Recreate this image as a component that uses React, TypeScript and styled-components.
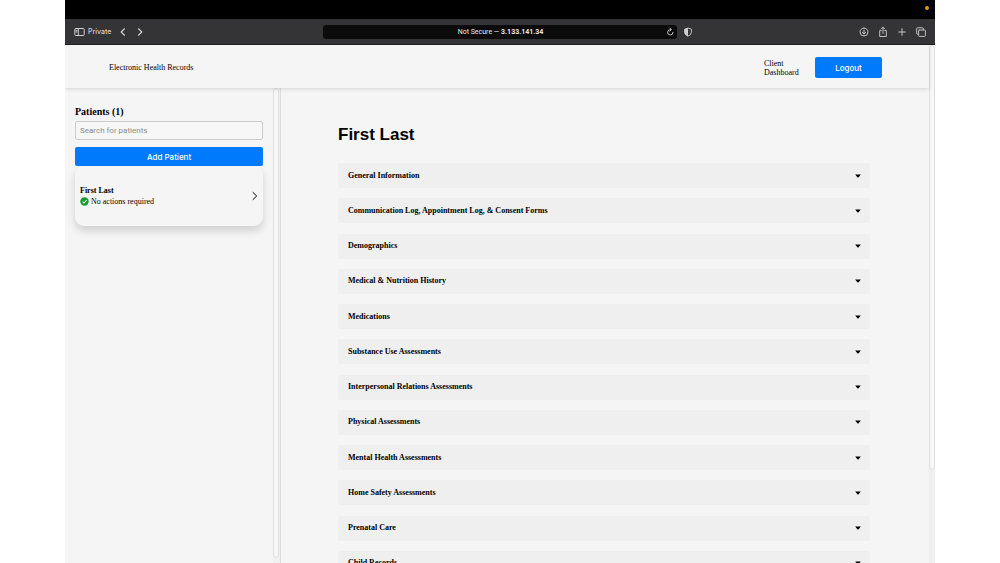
import React from "react";
import styled, { createGlobalStyle } from "styled-components";

const serif = `"Liberation Serif", "Times New Roman", serif`;
const sans = `Inter, "Liberation Sans", sans-serif`;
const narrowSans = `Roboto, "Liberation Sans", sans-serif`;

const GlobalStyle = createGlobalStyle`
  *, *::before, *::after { box-sizing: border-box; }
  body { margin: 0; background: #fff; font-family: ${serif}; font-size: 8px; line-height: 10px; color: #000; }
  h1, h2, h3, p, ul { margin: 0; padding: 0; }
  button { font: inherit; color: inherit; border: 0; padding: 0; background: none; cursor: pointer; }
`;

const Desktop = styled.div`
  height: 100vh;
  margin: 0 6.5%;
  display: flex;
  flex-direction: column;
  overflow: hidden;
  background: #f5f5f5;
`;

const MenuBar = styled.div`
  flex: none;
  height: 19px;
  padding: 6px 6px 0;
  display: flex;
  justify-content: flex-end;
  background: #000;
`;

const RecordingDot = styled.span`
  width: 4px;
  height: 4px;
  border-radius: 50%;
  background: #e8960c;
`;

const BrowserBar = styled.div`
  flex: none;
  height: 26px;
  display: grid;
  grid-template-columns: 1fr minmax(0, 354px) 1fr;
  align-items: center;
  background: #343436;
  border-bottom: 1px solid #202022;
  color: #d0d0d2;
  font-family: ${sans};
`;

const BarGroup = styled.div<{ $gap: number }>`
  display: flex;
  align-items: center;
  gap: ${(p) => p.$gap}px;
`;

const NavGroup = styled(BarGroup)`
  padding-left: 9px;
`;

const ToolGroup = styled(BarGroup)`
  padding: 0 8px 0 6px;
  justify-content: space-between;
`;

const PrivateLabel = styled.span`
  margin: 0 -1px 0 -6px;
  font-size: 7px;
  font-weight: 500;
`;

const IconButton = styled.button`
  display: flex;
`;

const AddressBar = styled.div`
  height: 14px;
  padding: 0 2px 0 12px;
  display: flex;
  align-items: center;
  border-radius: 3px;
  background: #0b0b0c;
  color: #e6e6e8;
  font-family: ${narrowSans};
  font-size: 7px;
`;

const Address = styled.span`
  flex: 1;
  text-align: center;
`;

const Viewport = styled.div`
  flex: 1;
  min-height: 0;
  display: flex;
`;

const Page = styled.div`
  flex: 1;
  min-width: 0;
  display: flex;
  flex-direction: column;
`;

const Header = styled.header`
  flex: none;
  height: 43px;
  padding: 2px 47px 0 44px;
  display: flex;
  align-items: center;
  gap: 16px;
  position: relative;
  background: #f5f5f5;
  box-shadow: 0 1px 4px rgba(0, 0, 0, 0.14);
`;

const Brand = styled.span`
  margin-right: auto;
`;

const HeaderLink = styled.a`
  width: 35px;
  line-height: 9px;
  color: inherit;
  text-decoration: none;
`;

const PrimaryButton = styled.button<{ $wide?: boolean }>`
  width: ${(p) => (p.$wide ? "100%" : "67px")};
  height: ${(p) => (p.$wide ? 19 : 21)}px;
  border-radius: 2px;
  background: #007afc;
  color: #fff;
  font-family: ${sans};
  font-weight: 500;
`;

const Columns = styled.div`
  flex: 1;
  min-height: 0;
  display: flex;
`;

const Sidebar = styled.aside`
  flex: none;
  width: 216px;
  display: flex;
  border-right: 1px solid #dcdcdc;
`;

const SidebarContent = styled.div`
  flex: 1;
  min-width: 0;
  padding: 18px 10px 0;
  display: flex;
  flex-direction: column;
`;

const SidebarTitle = styled.h2`
  font-size: 10px;
  line-height: 12px;
  font-weight: 700;
`;

const SearchInput = styled.input`
  width: 100%;
  height: 19px;
  margin: 3px 0 7px;
  padding: 0 4px;
  border: 1px solid #ccc;
  border-radius: 2px;
  background: #f7f7f7;
  font-family: ${narrowSans};
  font-size: 8px;
  &::placeholder { color: #8b8b8b; opacity: 1; }
`;

const PatientCard = styled.button`
  height: 60px;
  padding: 0 5px;
  display: flex;
  align-items: center;
  justify-content: space-between;
  border-radius: 9px;
  background: #f5f5f5;
  box-shadow: 0 5px 9px rgba(0, 0, 0, 0.15);
  clip-path: inset(0 -14px -16px -14px);
  text-align: left;
`;

const PatientInfo = styled.span`
  display: flex;
  flex-direction: column;
  gap: 1px;
`;

const Status = styled.span`
  display: flex;
  align-items: center;
  gap: 2px;
`;

const Track = styled.div<{ $inset?: boolean }>`
  flex: none;
  width: ${(p) => (p.$inset ? 7 : 6)}px;
  padding-right: ${(p) => (p.$inset ? 1 : 0)}px;
  background: #f0f0f0;
`;

const Thumb = styled.div<{ $size: string }>`
  height: ${(p) => p.$size};
  border: 1px solid #dedede;
  border-radius: 3px;
  background: #f7f7f7;
`;

const Main = styled.main`
  flex: 1;
  min-width: 0;
  padding: 36px 59px 0 57px;
  overflow: hidden;
`;

const PatientName = styled.h1`
  margin-bottom: 17px;
  font-family: "Liberation Sans", Arial, sans-serif;
  font-size: 17px;
  line-height: 22px;
  font-weight: 700;
`;

const SectionList = styled.ul`
  min-height: 413px;
  display: flex;
  flex-direction: column;
  justify-content: space-between;
  list-style: none;
`;

const SectionToggle = styled.button`
  width: 100%;
  height: 25px;
  padding: 0 9px 0 10px;
  display: flex;
  align-items: center;
  justify-content: space-between;
  border-radius: 2px;
  background: #efefef;
  font-weight: 700;
`;

const Stroke = ({ d, w = 12, h = 12, width = 1 }: { d: string; w?: number; h?: number; width?: number }) => (
  <svg width={w} height={h} viewBox={`0 0 ${w} ${h}`} fill="none" stroke="currentColor" strokeWidth={width} strokeLinecap="round" strokeLinejoin="round" aria-hidden="true">
    <path d={d} />
  </svg>
);

const tools = [
  { label: "Downloads", d: "M6 2a4 4 0 1 0 0 8a4 4 0 1 0 0-8M6 4v4M4.4 6.4L6 8l1.6-1.6" },
  { label: "Share", d: "M4.2 4.5H2.7v6h6.600v-6H7.8M6 7.3V1.3M4.3 2.9L6 1.2l1.7 1.7" },
  { label: "New tab", d: "M6 2.7v6.6M2.7 6h6.6" },
  { label: "Show tabs", d: "M4.4 4h5.2q.8 0 .8.8v4.8q0 .8-.8.8H4.4q-.8 0-.8-.8V4.8q0-.8.8-.8M3.4 8.2H2.5q-.8 0-.8-.8V2.6q0-.8.8-.8h5q.8 0 .8.8v1.2" },
];

const sections = [
  "General Information",
  "Communication Log, Appointment Log, & Consent Forms",
  "Demographics",
  "Medical & Nutrition History",
  "Medications",
  "Substance Use Assessments",
  "Interpersonal Relations Assessments",
  "Physical Assessments",
  "Mental Health Assessments",
  "Home Safety Assessments",
  "Prenatal Care",
  "Child Records",
];

export default function App() {
  return (
    <>
      <GlobalStyle />
      <Desktop>
        <MenuBar>
          <RecordingDot />
        </MenuBar>
        <BrowserBar>
          <NavGroup $gap={9}>
            <IconButton aria-label="Toggle sidebar">
              <Stroke w={11} h={10} d="M1.8 1.5h7.4q1 0 1 1v5q0 1-1 1H1.8q-1 0-1-1v-5q0-1 1-1M4.3 1.5v7M2 3.4h1M2 4.9h1" />
            </IconButton>
            <PrivateLabel>Private</PrivateLabel>
            <IconButton aria-label="Back">
              <Stroke w={8} h={10} width={1.2} d="M5.500 1.800L2.200 5l3.300 3.200" />
            </IconButton>
            <IconButton aria-label="Forward">
              <Stroke w={8} h={10} width={1.2} d="M2.500 1.800L5.800 5L2.500 8.200" />
            </IconButton>
          </NavGroup>
          <AddressBar>
            <Address>
              Not Secure — <strong>3.133.141.34</strong>
            </Address>
            <IconButton aria-label="Reload">
              <Stroke w={9} h={10} width={0.8} d="M4.700 2.600A2.700 2.700 0 1 0 7 5.300M3.800 1l1.600 1.600L3.800 4.100" />
            </IconButton>
          </AddressBar>
          <ToolGroup $gap={6}>
            <IconButton aria-label="Privacy report">
              <svg width="10" height="10" viewBox="0 0 10 10" aria-hidden="true">
                <path d="M5 1l3.400 1.200v3Q8.400 7.900 5 9.200Q1.600 7.900 1.600 5.200v-3z" fill="none" stroke="currentColor" strokeWidth="0.9" />
                <path d="M5 1v8.200Q1.600 7.900 1.600 5.200v-3z" fill="currentColor" />
              </svg>
            </IconButton>
            <BarGroup $gap={7}>
              {tools.map((t) => (
                <IconButton key={t.label} aria-label={t.label}>
                  <Stroke d={t.d} width={0.9} />
                </IconButton>
              ))}
            </BarGroup>
          </ToolGroup>
        </BrowserBar>
        <Viewport>
          <Page>
            <Header>
              <Brand>Electronic Health Records</Brand>
              <HeaderLink href="#dashboard">Client Dashboard</HeaderLink>
              <PrimaryButton>Logout</PrimaryButton>
            </Header>
            <Columns>
              <Sidebar>
                <SidebarContent>
                  <SidebarTitle>Patients (1)</SidebarTitle>
                  <SearchInput type="search" aria-label="Search for patients" placeholder="Search for patients" />
                  <PrimaryButton $wide>Add Patient</PrimaryButton>
                  <PatientCard>
                    <PatientInfo>
                      <strong>First Last</strong>
                      <Status>
                        <svg width="9" height="9" viewBox="0 0 9 9" aria-hidden="true">
                          <circle cx="4.500" cy="4.500" r="4.200" fill="#119c2b" />
                          <path d="M2.600 4.600L4 6l2.600-2.800" fill="none" stroke="#fff" strokeWidth="1.100" />
                        </svg>
                        No actions required
                      </Status>
                    </PatientInfo>
                    <Stroke w={6} h={10} d="M1 1.500L4.700 5L1 8.500" />
                  </PatientCard>
                </SidebarContent>
                <Track $inset>
                  <Thumb $size="99%" />
                </Track>
              </Sidebar>
              <Main>
                <PatientName>First Last</PatientName>
                <SectionList>
                  {sections.map((title) => (
                    <li key={title}>
                      <SectionToggle aria-expanded={false}>
                        {title}
                        <svg width="6" height="4" viewBox="0 0 6 4" aria-hidden="true">
                          <path d="M.2.500h5.600L3.600 3.300q-.6.600-1.200 0z" fill="#000" />
                        </svg>
                      </SectionToggle>
                    </li>
                  ))}
                </SectionList>
              </Main>
            </Columns>
          </Page>
          <Track>
            <Thumb $size="82%" />
          </Track>
        </Viewport>
      </Desktop>
    </>
  );
}
